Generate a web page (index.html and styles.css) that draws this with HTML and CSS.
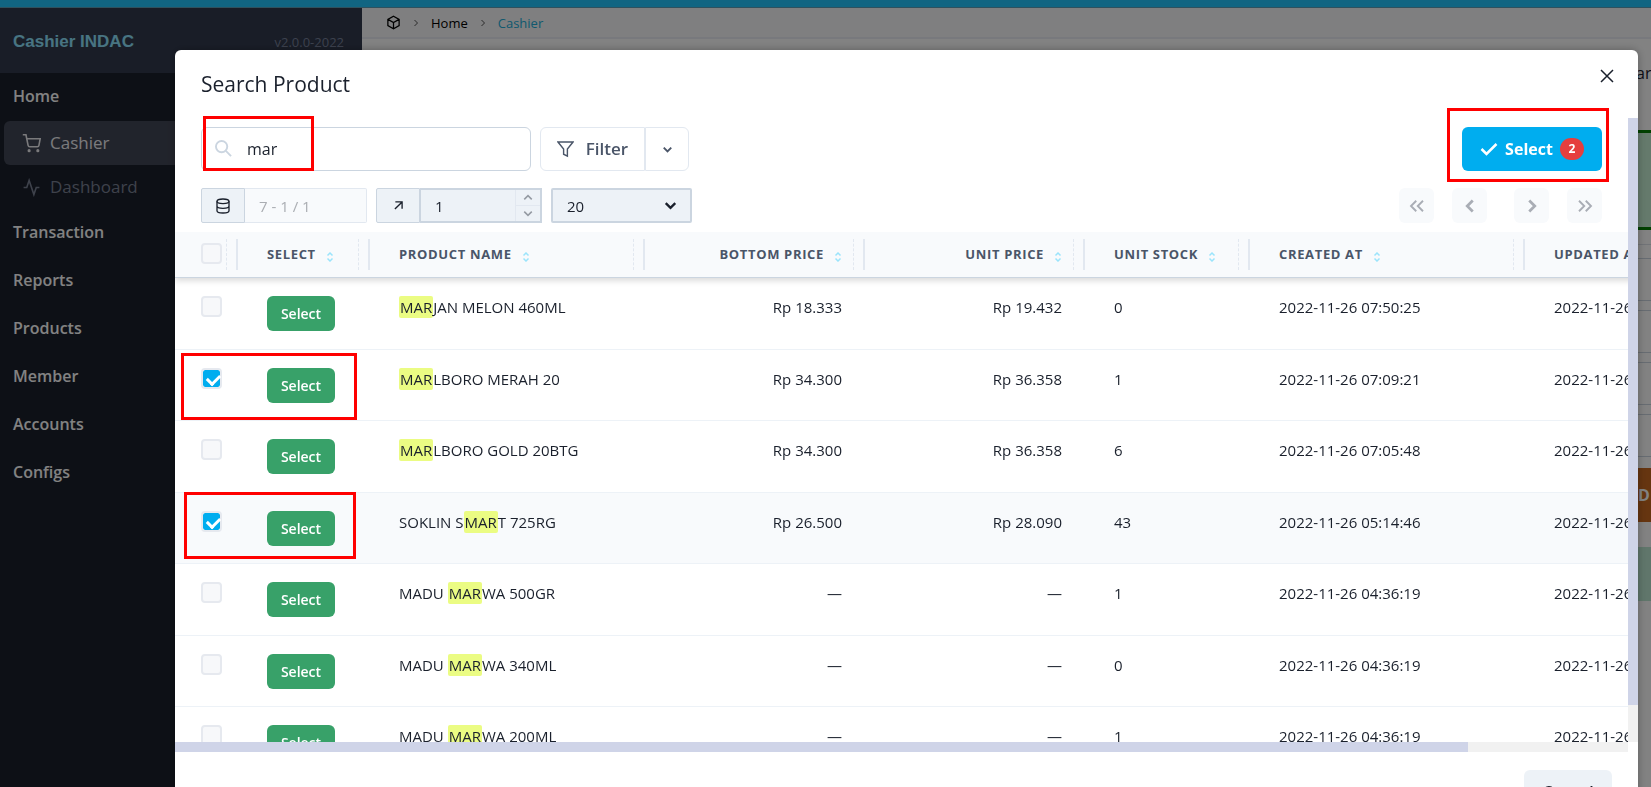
FILE: index.html
```html
<!DOCTYPE html>
<html lang="en">
<head>
    <meta charset="UTF-8">
    <meta name="viewport" content="width=device-width, initial-scale=1.0">
    <title>Cashier INDAC</title>
    <link rel="stylesheet" href="styles.css">
</head>
<body>
    <svg class="sprite" aria-hidden="true">
        <symbol id="sort" viewBox="0 0 8 10"><path d="M1.5 3.5 4 1l2.500 2.500M1.500 6.500 4 9l2.500-2.500"/></symbol>
        <symbol id="chevron-down" viewBox="0 0 24 24"><path d="m6 9 6 6 6-6"/></symbol>
        <symbol id="chevron-up" viewBox="0 0 24 24"><path d="m6 15 6-6 6 6"/></symbol>
        <symbol id="chevron-right" viewBox="0 0 24 24"><path d="m9 6 6 6-6 6"/></symbol>
        <symbol id="chevron-left" viewBox="0 0 24 24"><path d="m15 6-6 6 6 6"/></symbol>
    </svg>

    <div class="topbar"></div>
    <div class="layout">
        <aside class="sidebar">
            <div class="brand">
                <span class="brand-name">Cashier INDAC</span>
                <span class="version">v2.0.0-2022</span>
            </div>
            <nav>
                <h3>Home</h3>
                <a href="#" class="nav-item active">
                    <svg viewBox="0 0 24 24"><circle cx="9" cy="21" r="1"/><circle cx="20" cy="21" r="1"/><path d="M1 1h4l2.700 13.400a2 2 0 0 0 2 1.600h9.700a2 2 0 0 0 2-1.600L23 6H6"/></svg>
                    Cashier
                </a>
                <a href="#" class="nav-item">
                    <svg viewBox="0 0 24 24"><path d="M22 12h-4l-3 9L9 3l-3 9H2"/></svg>
                    Dashboard
                </a>
                <h3>Transaction</h3>
                <h3>Reports</h3>
                <h3>Products</h3>
                <h3>Member</h3>
                <h3>Accounts</h3>
                <h3>Configs</h3>
            </nav>
        </aside>
        <main class="main">
            <div class="breadcrumb">
                <svg class="cube" viewBox="0 0 24 24"><path d="M12 2 21 7v10l-9 5-9-5V7zM3 7l9 5 9-5M12 12v10"/></svg>
                <svg class="sep"><use href="#chevron-right"/></svg>
                <a href="#">Home</a>
                <svg class="sep"><use href="#chevron-right"/></svg>
                <a href="#" class="current">Cashier</a>
            </div>
            <div class="cart">
                <div class="cart-label">ar</div>
                <div class="cart-total"></div>
                <div class="cart-line"></div>
                <div class="cart-field"></div>
                <div class="cart-field"></div>
                <div class="cart-field"></div>
                <div class="cart-field"></div>
                <div class="cart-draft">D</div>
                <div class="cart-pay"></div>
            </div>
        </main>
    </div>

    <div class="overlay">
        <section class="modal" role="dialog" aria-labelledby="modalTitle">
            <header class="modal-header">
                <h2 id="modalTitle">Search Product</h2>
                <button class="close" aria-label="Close"><svg viewBox="0 0 14 14"><path d="m1 1 12 12M13 1 1 13"/></svg></button>
            </header>

            <div class="modal-body">
                <div class="content">
                    <div class="toolbar">
                        <div class="search">
                            <svg viewBox="0 0 18 18"><circle cx="7" cy="7" r="6"/><path d="m11.500 11.500 5.500 5.500"/></svg>
                            <input type="text" aria-label="Search" value="mar">
                            <div class="callout callout-search"></div>
                        </div>
                        <div class="filter">
                            <button class="filter-main">
                                <svg viewBox="0 0 18 18"><path d="M1 1h16l-6 7.500V16l-4-2V8.500z"/></svg>
                                Filter
                            </button>
                            <button class="filter-more" aria-label="More filters"><svg><use href="#chevron-down"/></svg></button>
                        </div>
                        <div class="confirm">
                            <button class="btn-confirm">
                                <svg viewBox="0 0 18 14"><path d="m1.500 7 5 5 10-10"/></svg>
                                Select
                                <span class="badge">2</span>
                            </button>
                            <div class="callout callout-confirm"></div>
                        </div>
                    </div>

                    <div class="pager">
                        <div class="group">
                            <label for="total" class="addon"><svg viewBox="0 0 24 24"><ellipse cx="12" cy="5" rx="9" ry="3.500"/><path d="M3 5v14c0 2 4 3.500 9 3.500s9-1.500 9-3.500V5M3 12c0 2 4 3.500 9 3.500s9-1.500 9-3.500"/></svg></label>
                            <input type="text" id="total" class="total" value="7 - 1 / 1" disabled>
                        </div>
                        <div class="group">
                            <label for="page" class="addon"><svg class="arrow" viewBox="0 0 10 10"><path d="m1 9 8-8M1.500 1H9v7.500"/></svg></label>
                            <div class="number">
                                <input type="text" id="page" value="1">
                                <div class="stepper">
                                    <button aria-label="Next page number"><svg><use href="#chevron-up"/></svg></button>
                                    <button aria-label="Previous page number"><svg><use href="#chevron-down"/></svg></button>
                                </div>
                            </div>
                        </div>
                        <div class="size">
                            <select aria-label="Rows per page"><option>20</option><option>50</option></select>
                            <svg><use href="#chevron-down"/></svg>
                        </div>
                        <div class="pages">
                            <div class="pages-pair">
                                <button aria-label="First page" disabled><svg viewBox="0 0 24 24"><path d="m11 5-7 7 7 7M20 5l-7 7 7 7"/></svg></button>
                                <button aria-label="Previous page" disabled><svg class="single"><use href="#chevron-left"/></svg></button>
                            </div>
                            <div class="pages-pair">
                                <button aria-label="Next page" disabled><svg class="single"><use href="#chevron-right"/></svg></button>
                                <button aria-label="Last page" disabled><svg viewBox="0 0 24 24"><path d="m13 5 7 7-7 7M4 5l7 7-7 7"/></svg></button>
                            </div>
                        </div>
                    </div>

                    <div class="table-wrap">
                        <table>
                            <colgroup>
                                <col class="col-check"><col class="col-select"><col class="col-wide"><col class="col-price"><col class="col-price"><col class="col-stock"><col class="col-wide"><col class="col-wide">
                            </colgroup>
                            <thead>
                                <tr>
                                    <th><input type="checkbox" aria-label="Select all" disabled></th>
                                    <th>Select<svg><use href="#sort"/></svg></th>
                                    <th>Product Name<svg><use href="#sort"/></svg></th>
                                    <th class="num">Bottom Price<svg><use href="#sort"/></svg></th>
                                    <th class="num">Unit Price<svg><use href="#sort"/></svg></th>
                                    <th>Unit Stock<svg><use href="#sort"/></svg></th>
                                    <th>Created At<svg><use href="#sort"/></svg></th>
                                    <th>Updated At<svg><use href="#sort"/></svg></th>
                                </tr>
                            </thead>
                            <tbody>
                                <tr>
                                    <td><input type="checkbox" aria-label="Marjan Melon 460ml"></td>
                                    <td><button class="btn-row">Select</button></td>
                                    <td><mark>MAR</mark>JAN MELON 460ML</td>
                                    <td class="num">Rp 18.333</td>
                                    <td class="num">Rp 19.432</td>
                                    <td>0</td>
                                    <td>2022-11-26 07:50:25</td>
                                    <td>2022-11-26 07:50:25</td>
                                </tr>
                                <tr>
                                    <td><input type="checkbox" aria-label="Marlboro Merah 20" checked><div class="callout callout-row"></div></td>
                                    <td><button class="btn-row">Select</button></td>
                                    <td><mark>MAR</mark>LBORO MERAH 20</td>
                                    <td class="num">Rp 34.300</td>
                                    <td class="num">Rp 36.358</td>
                                    <td>1</td>
                                    <td>2022-11-26 07:09:21</td>
                                    <td>2022-11-26 07:09:21</td>
                                </tr>
                                <tr>
                                    <td><input type="checkbox" aria-label="Marlboro Gold 20btg"></td>
                                    <td><button class="btn-row">Select</button></td>
                                    <td><mark>MAR</mark>LBORO GOLD 20BTG</td>
                                    <td class="num">Rp 34.300</td>
                                    <td class="num">Rp 36.358</td>
                                    <td>6</td>
                                    <td>2022-11-26 07:05:48</td>
                                    <td>2022-11-26 07:05:48</td>
                                </tr>
                                <tr class="hovered">
                                    <td><input type="checkbox" aria-label="Soklin Smart 725rg" checked><div class="callout callout-hovered"></div></td>
                                    <td><button class="btn-row">Select</button></td>
                                    <td>SOKLIN S<mark>MAR</mark>T 725RG</td>
                                    <td class="num">Rp 26.500</td>
                                    <td class="num">Rp 28.090</td>
                                    <td>43</td>
                                    <td>2022-11-26 05:14:46</td>
                                    <td>2022-11-26 05:14:46</td>
                                </tr>
                                <tr>
                                    <td><input type="checkbox" aria-label="Madu Marwa 500gr"></td>
                                    <td><button class="btn-row">Select</button></td>
                                    <td>MADU <mark>MAR</mark>WA 500GR</td>
                                    <td class="num">—</td>
                                    <td class="num">—</td>
                                    <td>1</td>
                                    <td>2022-11-26 04:36:19</td>
                                    <td>2022-11-26 04:36:19</td>
                                </tr>
                                <tr>
                                    <td><input type="checkbox" aria-label="Madu Marwa 340ml"></td>
                                    <td><button class="btn-row">Select</button></td>
                                    <td>MADU <mark>MAR</mark>WA 340ML</td>
                                    <td class="num">—</td>
                                    <td class="num">—</td>
                                    <td>0</td>
                                    <td>2022-11-26 04:36:19</td>
                                    <td>2022-11-26 04:36:19</td>
                                </tr>
                                <tr>
                                    <td><input type="checkbox" aria-label="Madu Marwa 200ml"></td>
                                    <td><button class="btn-row">Select</button></td>
                                    <td>MADU <mark>MAR</mark>WA 200ML</td>
                                    <td class="num">—</td>
                                    <td class="num">—</td>
                                    <td>1</td>
                                    <td>2022-11-26 04:36:19</td>
                                    <td>2022-11-26 04:36:19</td>
                                </tr>
                            </tbody>
                        </table>
                    </div>
                </div>
                <div class="track track-y"><div class="thumb"></div></div>
                <div class="track track-x"><div class="thumb"></div></div>
            </div>

            <footer class="modal-footer">
                <button class="btn-cancel">Cancel</button>
            </footer>
        </section>
    </div>
</body>
</html>
```
FILE: styles.css
```css
:root {
    --gray-50: #f8fafc;
    --gray-100: #edf2f7;
    --gray-200: #e2e8f0;
    --gray-300: #cbd5e0;
    --gray-600: #4a5568;
    --gray-800: #1a202c;
    --blue: #00adef;
    --green: #38a169;
    --scroll: #cfd4e8;
}

* {
    box-sizing: border-box;
}

body {
    margin: 0;
    height: 100vh;
    overflow: hidden;
    display: flex;
    flex-direction: column;
    font-family: "Open Sans", "Noto Sans", sans-serif;
    font-size: 14px;
    line-height: 22px;
    color: var(--gray-800);
    background: #fff;
}

button, input, select {
    font: inherit;
    color: inherit;
    margin: 0;
}

button {
    padding: 0;
    border: none;
    background: none;
    cursor: pointer;
}

a {
    color: inherit;
    text-decoration: none;
}

svg {
    fill: none;
    stroke: currentColor;
    stroke-width: 2;
    flex: none;
}

h2, h3 {
    margin: 0;
}

.sprite {
    position: absolute;
    width: 0;
    height: 0;
}

/* page behind the modal */
.topbar {
    height: 8px;
    flex: none;
    background: #22c6ff;
    border-bottom: 1px solid #5c9fb8;
}

.layout {
    flex: 1;
    display: flex;
}

.sidebar {
    width: 362px;
    background: #1a202c;
    color: #fff;
}

.brand {
    height: 65px;
    padding: 2px 18px 0 13px;
    display: flex;
    align-items: center;
    justify-content: space-between;
    background: #323a4e;
}

.brand-name {
    font: bold 17px "Liberation Sans", sans-serif;
    color: #8ee4ff;
}

.version {
    font-size: 13px;
    color: #77819a;
}

.sidebar h3 {
    height: 48px;
    padding-left: 13px;
    font-size: 16px;
    font-weight: 600;
    line-height: 46px;
}

.nav-item {
    height: 44px;
    margin: 0 4px;
    padding-left: 18px;
    display: flex;
    align-items: center;
    gap: 9px;
    border-radius: 6px;
    font-size: 17px;
    color: #7a8294;
}

.nav-item svg {
    width: 19px;
    height: 19px;
}

.nav-item.active {
    background: #424756;
    color: #f0f0f4;
}

.main {
    flex: 1;
    display: flex;
    flex-direction: column;
}

.breadcrumb {
    height: 31px;
    padding-left: 24px;
    display: flex;
    align-items: center;
    gap: 9px;
    border-bottom: 2px solid #ecedf5;
    background: #f9fafb;
    font-size: 13px;
    color: #000;
}

.cube {
    width: 15px;
    height: 15px;
}

.sep {
    width: 12px;
    height: 12px;
    color: #555;
}

.breadcrumb .current {
    color: #22aeda;
}

.cart {
    align-self: flex-end;
    width: 15px;
    padding-top: 23px;
    display: flex;
    flex-direction: column;
    overflow: hidden;
}

.cart-label {
    font-size: 16px;
    margin-bottom: 46px;
}

.cart-total {
    height: 100px;
    border: solid green;
    border-width: 3px 0;
    background: #c6f0d4;
}

.cart-line {
    height: 15px;
    border-bottom: 1px solid #dde2ea;
}

.cart-field {
    height: 43px;
    margin-top: 13px;
    margin-bottom: -4px;
    border: solid #cbd5e0;
    border-width: 1px 0;
}

.cart-draft {
    height: 54px;
    margin-top: 15px;
    padding-left: 2px;
    background: #c86820;
    color: #fff;
    font-size: 16px;
    font-weight: 700;
    line-height: 54px;
}

.cart-pay {
    height: 54px;
    margin-top: 25px;
    background: #bce8d2;
}

/* modal */
.overlay {
    position: fixed;
    inset: 0;
    padding: 50px 13px 0 175px;
    background: rgba(0, 0, 0, .49);
}

.modal {
    background: #fff;
    border-radius: 6px;
    box-shadow: 0 0 8px rgba(0, 0, 0, .3);
}

.modal-header {
    padding: 18px 24px 18px 26px;
    display: flex;
    justify-content: space-between;
    align-items: flex-start;
}

.modal-header h2 {
    font-size: 21px;
    font-weight: 500;
    line-height: 32px;
}

.close {
    width: 14px;
    height: 16px;
}

.close svg {
    display: block;
    width: 14px;
    height: 16px;
    stroke-width: 1.5;
}

.modal-body {
    height: calc(100vh - 153px);
    display: grid;
    grid-template-columns: minmax(0, 1fr) 10px;
    grid-template-rows: minmax(0, 1fr) 10px;
}

.content {
    display: flex;
    flex-direction: column;
    min-height: 0;
}

.toolbar {
    padding: 9px 26px 0;
    display: flex;
    gap: 9px;
}

.search {
    position: relative;
    width: 330px;
}

.search svg {
    position: absolute;
    left: 14px;
    top: 13px;
    width: 17px;
    height: 17px;
    color: var(--gray-300);
}

.search input {
    display: block;
    width: 100%;
    height: 44px;
    padding: 0 16px 0 45px;
    border: 1px solid var(--gray-300);
    border-radius: 6px;
    font-size: 16px;
}

.filter {
    display: flex;
    color: var(--gray-600);
}

.filter button {
    height: 44px;
    display: flex;
    align-items: center;
    justify-content: center;
    border: 1px solid var(--gray-200);
}

.filter-main {
    width: 105px;
    gap: 12px;
    border-radius: 6px 0 0 6px;
    font-size: 17px;
    font-weight: 600;
}

.filter-main svg {
    width: 17px;
    height: 17px;
    stroke-width: 1.5;
}

.filter .filter-more {
    width: 44px;
    border-left: 1px solid var(--gray-200);
    border-radius: 0 6px 6px 0;
}

.filter-more svg {
    width: 15px;
    height: 15px;
    stroke-width: 3;
}

.confirm {
    position: relative;
    margin-left: auto;
}

.btn-confirm {
    width: 140px;
    height: 44px;
    display: flex;
    align-items: center;
    justify-content: center;
    gap: 7px;
    border-radius: 6px;
    background: var(--blue);
    color: #fff;
    font-size: 16px;
    font-weight: 700;
}

.btn-confirm svg {
    width: 18px;
    height: 14px;
    stroke-width: 2.5;
}

.badge {
    width: 24px;
    border-radius: 11px;
    background: #e53e3e;
    font-size: 12px;
}

.callout {
    position: absolute;
    border: 3px solid #f00;
    pointer-events: none;
}

.callout-search {
    left: 2px;
    top: -11px;
    width: 111px;
    height: 55px;
}

.callout-confirm {
    inset: -19px -7px -11px -15px;
}

.callout-row {
    left: 6px;
    top: 3px;
    width: 176px;
    height: 67px;
}

.callout-hovered {
    left: 9px;
    top: -1px;
    width: 172px;
    height: 67px;
}

.pager {
    padding: 17px 26px 9px;
    display: flex;
    gap: 9px;
}

.group {
    display: flex;
    height: 35px;
}

.addon {
    width: 44px;
    display: flex;
    align-items: center;
    justify-content: center;
    border: 1px solid var(--gray-300);
    border-radius: 2px 0 0 2px;
    background: var(--gray-100);
}

.addon svg {
    width: 16px;
    height: 16px;
}

.addon .arrow {
    width: 9px;
    height: 9px;
    stroke-width: 1.5;
}

.total {
    width: 122px;
    padding: 0 14px;
    border: 1px solid var(--gray-200);
    border-left: none;
    border-radius: 0 2px 2px 0;
    background: var(--gray-50);
    font-size: 15px;
    color: #aaadb2;
}

.number {
    width: 122px;
    display: flex;
    border: 2px solid var(--gray-300);
    border-left-width: 1px;
    background: var(--gray-100);
}

.number input {
    flex: 1;
    width: 0;
    padding: 0 14px;
    border: none;
    background: none;
    font-size: 15px;
}

.stepper {
    width: 25px;
    display: flex;
    flex-direction: column;
    border-left: 1px solid var(--gray-200);
    color: #959ba3;
}

.stepper button {
    flex: 1;
    display: flex;
    align-items: center;
    justify-content: center;
}

.stepper button + button {
    border-top: 1px solid var(--gray-200);
}

.stepper svg {
    width: 16px;
    height: 15px;
    stroke-width: 2.5;
}

.size {
    position: relative;
    width: 141px;
}

.size select {
    display: block;
    width: 100%;
    height: 35px;
    padding: 0 14px;
    border: 2px solid var(--gray-300);
    border-radius: 2px;
    background: var(--gray-100);
    appearance: none;
    font-size: 15px;
}

.size svg {
    position: absolute;
    right: 12px;
    top: 8px;
    width: 19px;
    height: 19px;
    stroke-width: 3;
}

.pages {
    margin-left: auto;
    display: flex;
    gap: 27px;
}

.pages-pair {
    display: flex;
    gap: 18px;
}

.pages button {
    width: 35px;
    height: 35px;
    display: flex;
    align-items: center;
    justify-content: center;
    border-radius: 6px;
    background: var(--gray-50);
    color: #a9adb5;
}

.pages svg {
    width: 18px;
    height: 18px;
    stroke-width: 2.5;
}

.pages .single {
    width: 22px;
    height: 22px;
    stroke-width: 3;
}

/* product table */
.table-wrap {
    flex: 1;
    min-height: 0;
    overflow: hidden;
}

table {
    width: 1628px;
    table-layout: fixed;
    border-collapse: separate;
    border-spacing: 0;
}

.col-check { width: 66px; }
.col-select { width: 132px; }
.col-wide { width: 275px; }
.col-price { width: 220px; }
.col-stock { width: 165px; }

thead {
    box-shadow: 0 3px 6px rgba(0, 0, 0, .14);
}

th {
    position: relative;
    height: 46px;
    padding: 0 26px 2px;
    border-bottom: 1px solid var(--gray-300);
    background: var(--gray-50);
    color: var(--gray-600);
    font-size: 13px;
    font-weight: 700;
    letter-spacing: .05em;
    text-align: left;
    text-transform: uppercase;
    white-space: nowrap;
}

/* resize handle */
th::after {
    content: "";
    position: absolute;
    right: 3px;
    top: 7px;
    width: 9px;
    height: 31px;
    border-left: 1px dashed var(--gray-200);
    border-right: 2px solid var(--gray-200);
}

th svg {
    width: 8px;
    height: 10px;
    margin-left: 10px;
    vertical-align: -3px;
    stroke-width: 1.5;
    color: #9be4fb;
}

.num {
    text-align: right;
}

tbody tr {
    height: 72px;
}

tbody tr:nth-child(even) {
    height: 71px;
}

td {
    position: relative;
    padding: 18px 26px 0;
    border-bottom: 1px solid var(--gray-100);
    font-size: 15px;
    vertical-align: top;
    white-space: nowrap;
}

.hovered {
    background: var(--gray-50);
}

input[type="checkbox"] {
    appearance: none;
    display: block;
    width: 21px;
    height: 21px;
    border: 2px solid #e6e9ef;
    border-radius: 4px;
    background: #f7f8fa;
}

input[type="checkbox"]:checked {
    background: var(--blue) content-box;
}

/* tick */
input[type="checkbox"]:checked::before {
    content: "";
    display: block;
    width: 6px;
    height: 10px;
    margin: 2px 0 0 6px;
    border: solid #fff;
    border-width: 0 3px 3px 0;
    transform: rotate(45deg);
}

.btn-row {
    display: block;
    width: 68px;
    height: 35px;
    border-radius: 6px;
    background: var(--green);
    color: #fff;
    font-size: 14px;
    font-weight: 600;
}

mark {
    display: inline-block;
    padding: 0 1px;
    border-radius: 2px;
    background: #ebfc83;
    color: inherit;
}

/* scrollbars */
.track {
    background: #f1f1f1;
}

.thumb {
    background: var(--scroll);
}

.track-y .thumb {
    height: 94%;
}

.track-x .thumb {
    width: 89%;
    height: 10px;
}

.modal-footer {
    padding: 18px 26px;
    display: flex;
    justify-content: flex-end;
}

.btn-cancel {
    width: 88px;
    height: 44px;
    border-radius: 6px;
    background: var(--gray-100);
    font-size: 16px;
    font-weight: 600;
}
```
